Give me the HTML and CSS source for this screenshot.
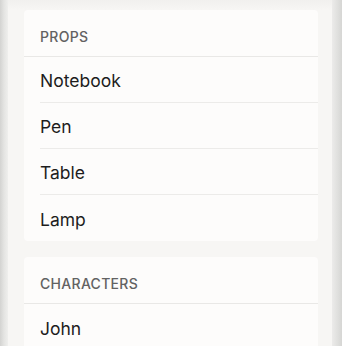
FILE: index.html
```html
<!DOCTYPE html>
<html lang="en">
<head>
<meta charset="utf-8">
<title>Lists</title>
<link rel="stylesheet" href="styles.css">
</head>
<body>
<div class="screen">
  <div class="panel">
    <section class="card">
      <div class="card-header">PROPS</div>
      <ul class="rows">
        <li class="row">Notebook</li>
        <li class="row">Pen</li>
        <li class="row">Table</li>
        <li class="row">Lamp</li>
      </ul>
    </section>
    <section class="card">
      <div class="card-header">CHARACTERS</div>
      <ul class="rows">
        <li class="row">John</li>
      </ul>
    </section>
  </div>
</div>
</body>
</html>
```
FILE: styles.css
```css
html, body {
  margin: 0;
  padding: 0;
  height: 100%;
  overflow: hidden;
}
body {
  background: #e2e2e0;
  font-family: Inter, "Noto Sans", "Liberation Sans", sans-serif;
}
.screen {
  display: flex;
  height: 346px;
  overflow: hidden;
  background: linear-gradient(to right, #d3d3d1 0, #e4e4e2 4px, #efefed 8px, transparent 8px),
              linear-gradient(to left, #d6d6d4 0, #e3e3e1 6px, #ecebea 10px, transparent 10px);
  padding: 0 10px 0 8px;
}
.panel {
  flex: 1;
  background: linear-gradient(to bottom, #f1f0ee 0, #f7f6f4 10px);
  padding: 10px 14px 0 16px;
  display: flex;
  flex-direction: column;
  gap: 16px;
}
.card {
  background: #fdfcfb;
  border-radius: 4px;
}
.card-header {
  height: 47px;
  box-sizing: border-box;
  display: flex;
  align-items: flex-end;
  padding: 0 16px 11px;
  font-size: 14px;
  font-weight: 500;
  letter-spacing: 0.3px;
  color: #626262;
  border-bottom: 1px solid #e9e8e6;
}
.rows {
  list-style: none;
  margin: 0;
  padding: 0 0 0 16px;
}
.row {
  height: 46px;
  box-sizing: border-box;
  display: flex;
  align-items: center;
  padding-top: 2px;
  font-size: 17.5px;
  color: #1d1d1d;
  border-bottom: 1px solid #ecebe9;
}
.row:last-child {
  border-bottom: none;
}
```
